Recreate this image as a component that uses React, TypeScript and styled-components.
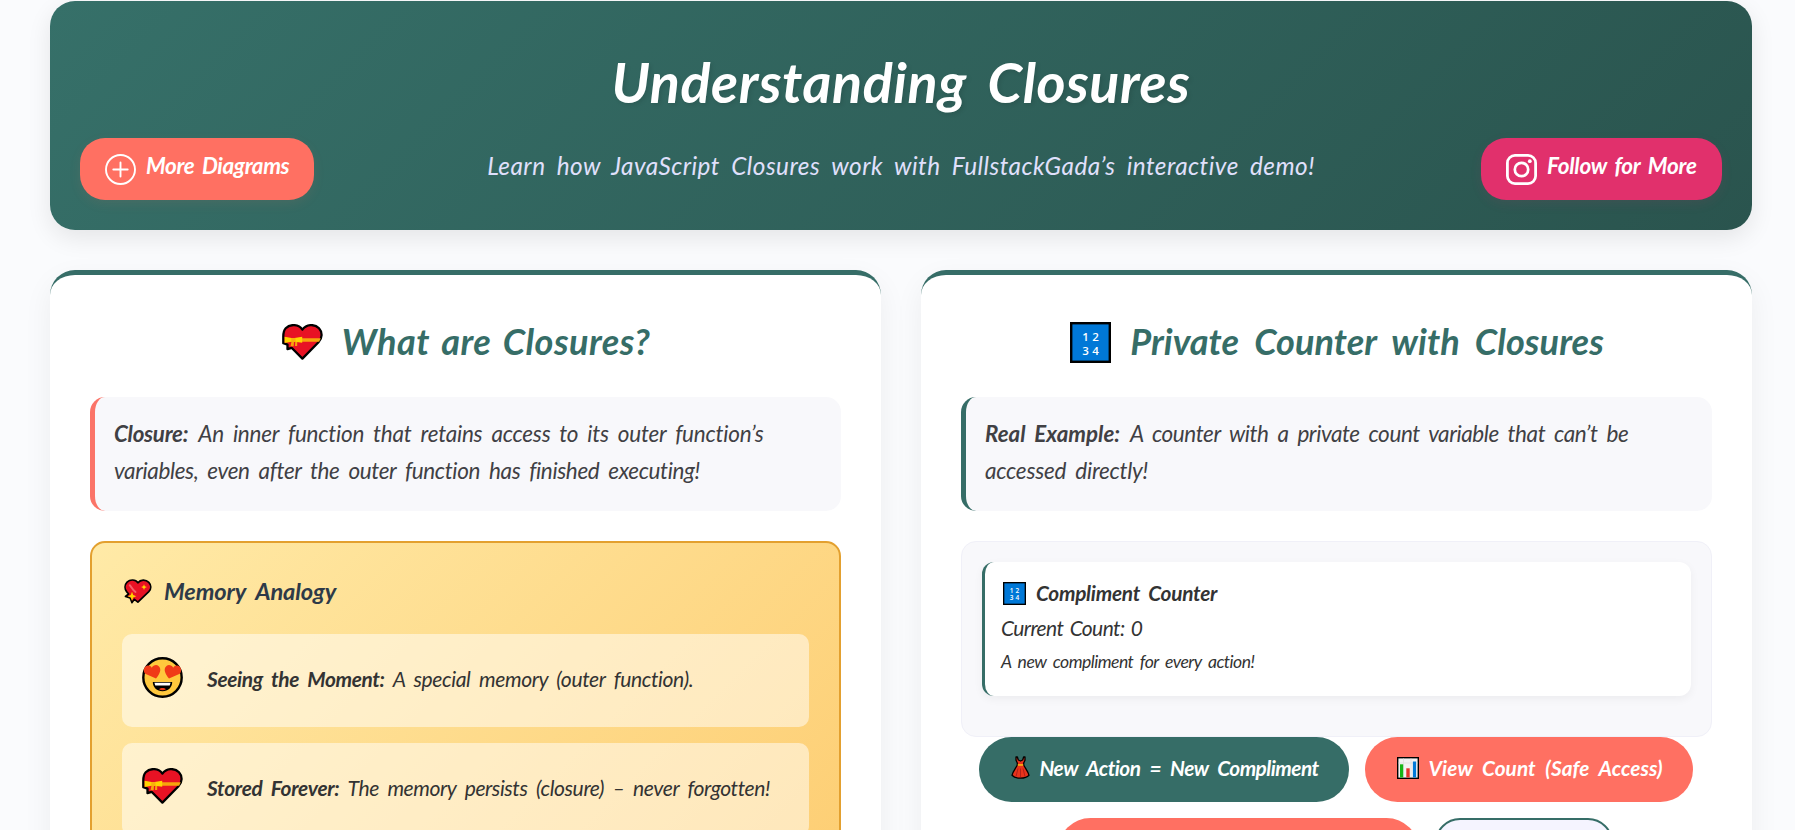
import React from "react";
import styled, { createGlobalStyle } from "styled-components";

const green = "#366d67";
const coral = "#ff7062";

const GlobalStyle = createGlobalStyle`
  * { box-sizing: border-box; }
  html, body { margin: 0; overflow: hidden; }
  body {
    background: #fafbfd;
    font-family: Lato, "Open Sans", sans-serif;
    font-style: italic;
    color: #333;
  }
  svg { display: block; flex: none; }
`;

const Page = styled.main`
  height: 830px;
  padding: 1px 43px 0 50px;
  overflow: hidden;
`;

const Text = styled.span<{ $size: number; $bold?: boolean; $ls?: number; $ws?: number }>`
  font-size: ${p => p.$size}px;
  font-weight: ${p => (p.$bold ? 700 : 400)};
  letter-spacing: ${p => p.$ls ?? 0}px;
  word-spacing: ${p => p.$ws ?? 4}px;
  white-space: nowrap;
`;

const Header = styled.header`
  height: 229px;
  padding: 45px 30px 30px;
  border-radius: 25px;
  background: linear-gradient(135deg, #367069 0%, #2a544e 100%);
  box-shadow: 0 8px 25px rgba(0, 0, 0, 0.09);
`;

const Title = styled.h1`
  margin: 0 0 22px;
  height: 70px;
  line-height: 71px;
  text-align: center;
  font-size: 55.6px;
  font-weight: 700;
  letter-spacing: 0.6px;
  word-spacing: 8px;
  color: #fff;
  text-shadow: 2px 2px 4px rgba(0, 0, 0, 0.1);
`;

const HeaderRow = styled.div`
  display: grid;
  grid-template-columns: 241px 1fr 241px;
  align-items: center;
`;

const Subtitle = styled.p`
  margin: 0;
  padding-bottom: 4px;
  text-align: center;
  color: #e0e0fc;
  line-height: 30px;
`;

const LinkButton = styled.a<{ $color: string; $width: number }>`
  display: flex;
  align-items: center;
  gap: 10px;
  width: ${p => p.$width}px;
  height: 62px;
  padding-left: 25px;
  border-radius: 25px;
  background: ${p => p.$color};
  color: #fff;
  box-shadow: 0 4px 12px ${p => p.$color}18;

  ${Text} { padding-bottom: 7px; }
`;

const Columns = styled.div`
  display: grid;
  grid-template-columns: 1fr 1fr;
  gap: 40px;
  margin-top: 40px;
`;

const Card = styled.section`
  height: 900px;
  padding: 40px;
  border-top: 5px solid ${green};
  border-radius: 25px;
  background: #fff;
  box-shadow: 0 10px 30px rgba(0, 0, 0, 0.06);
`;

const CardTitle = styled.h2`
  display: flex;
  align-items: center;
  justify-content: center;
  gap: 19px;
  height: 54px;
  margin: 0 0 28px;
  padding-left: 1px;
  color: ${green};

  ${Text} { padding-bottom: 2px; }
`;

const Info = styled.div<{ $accent: string }>`
  height: 114px;
  margin-bottom: 30px;
  padding: 18px 19px;
  border-left: 5px solid ${p => p.$accent};
  border-radius: 15px;
  background: #f8f8fb;
  color: #404044;
`;

const InfoLine = styled.div`
  display: flex;
  gap: 10px;
  line-height: 37px;
`;

const Analogy = styled.div`
  height: 450px;
  padding: 30px;
  border: 2px solid #e3a02f;
  border-radius: 15px;
  background: linear-gradient(135deg, #ffeaa7 0%, #fdcb6e 100%);
`;

const AnalogyTitle = styled.h3`
  display: flex;
  align-items: center;
  gap: 12px;
  height: 36px;
  margin: 0 0 25px;
  padding-left: 2px;
  color: #2d3a48;

  ${Text} { padding-bottom: 1px; }
`;

const Step = styled.div`
  display: flex;
  align-items: center;
  height: 93px;
  margin-bottom: 16px;
  padding: 0 20px 6px;
  border-radius: 10px;
  background: rgba(255, 255, 255, 0.5);
`;

const StepText = styled.div`
  display: flex;
  gap: 8px;
  margin-left: 24px;
  padding-top: 2px;
`;

const Panel = styled.div`
  height: 196px;
  padding: 20px;
  border: 1px solid #f0f0f8;
  border-radius: 15px;
  background: #f8f8fb;
`;

const CounterCard = styled.div`
  display: flex;
  flex-direction: column;
  height: 134px;
  padding: 14px 16px;
  border-left: 3px solid ${green};
  border-radius: 12px;
  background: #fff;
  box-shadow: 0 3px 10px rgba(0, 0, 0, 0.05);
  line-height: 34.6px;
`;

const CounterTitle = styled.div`
  display: flex;
  align-items: center;
  gap: 10px;
  padding-left: 2px;
`;

const Actions = styled.div`
  display: flex;
  flex-wrap: wrap;
  justify-content: center;
  gap: 16px;
  padding-right: 2px;
`;

const ActionButton = styled.button<{ $width: number; $variant: "green" | "coral" | "outline" }>`
  display: flex;
  align-items: center;
  gap: 10px;
  width: ${p => p.$width}px;
  height: 65px;
  padding: 0 0 4px 32px;
  border: ${p => (p.$variant === "outline" ? `2px solid ${green}` : "none")};
  border-radius: ${p => (p.$variant === "outline" ? 25 : 32.5)}px;
  background: ${p => (p.$variant === "green" ? green : p.$variant === "coral" ? coral : "#f5f4ff")};
  color: #fff;
  font-family: inherit;
  font-style: italic;
`;

const PlusCircle = () => (
  <svg width="31" height="31" viewBox="0 0 31 31" fill="none" stroke="#fff" strokeWidth="1.9" strokeLinecap="round">
    <circle cx="15.5" cy="15.5" r="14.5" />
    <path d="M15.5 8.5v14M8.3 15.5h14.4" />
  </svg>
);

const Instagram = () => (
  <svg width="31" height="31" viewBox="0 0 31 31" fill="none" stroke="#fff">
    <rect x="1.4" y="1.4" width="28.2" height="28.2" rx="7.6" strokeWidth="2.8" />
    <circle cx="15.5" cy="15.5" r="6.7" strokeWidth="2.7" />
    <circle cx="23.8" cy="7.2" r="1.9" fill="#fff" stroke="none" />
  </svg>
);

const RibbonHeart = () => (
  <svg width="41" height="37" viewBox="0 0 41 37">
    <path
      d="M20.4 5.6C16.5-.2 8-.1 3.7 4.2 1.3 6.7 1.3 9.500 1.3 12.5V19.2L5.500 20.6V25.200L9.6 23.8 20.4 34.6 36.5 18.2C40.4 14.2 40.6 8.2 37 4.3 32.7-.2 24.5-.1 20.4 5.6Z"
      fill="#e81224" stroke="#000" strokeWidth="2.3" strokeLinejoin="round"
    />
    <path d="M19 14.3H38.7L37.2 17.8H19Z" fill="#f7a30c" />
    <path d="M9.5 17.5H12L11.7 22.2H8.5ZM13.2 17.5H15.2V22H13Z" fill="#f7a30c" />
    <path d="M2.6 12.8 11 14.3 20.2 12.8V18.8L11 17.6 2.6 19Z" fill="#ffd400" />
    <path d="M9.3 14H13.5V18H9.3Z" fill="#f9b10b" />
  </svg>
);

const SparkleHeart = () => (
  <svg width="28" height="25" viewBox="0 0 28 25">
    <path
      d="M14 3.8C11.5.2 6 .2 3.1 3.2.6 5.8.4 9.8 2.6 12.6L4.6 15 1.5 17.4 6.2 19 8 23.6 10.4 20.3 13.9 23.2 24.8 12.6C27.4 9.9 27.4 6 24.8 3.3 21.8.2 16.5.2 14 3.8Z"
      fill="#e81224" stroke="#000" strokeWidth="1.7" strokeLinejoin="round"
    />
    <path d="M5.8 6.2C7.500 8 8 10.500 11.500 13" stroke="#f4606a" strokeWidth="2" fill="none" strokeLinecap="round" />
    <path d="M8 12.8 9.2 16 12.3 17.2 9.2 18.4 8 21.8 6.8 18.4 3.8 17.2 6.8 16ZM20 5.2 20.8 7.3 22.9 8.1 20.8 8.9 20 11 19.2 8.9 17.1 8.1 19.2 7.3Z" fill="#ffd400" />
  </svg>
);

const HeartEyes = () => (
  <svg width="41" height="41" viewBox="0 0 41 41">
    <circle cx="20.5" cy="20.5" r="19.2" fill="#ffc83d" stroke="#000" strokeWidth="2.4" />
    <path
      d="M14 21.6 3.2 16.7C.8 14.5 1.7 9.7 4.9 8.8 7 8.2 8.8 9.1 9.8 10.8 11 8.2 14.4 7.3 16.5 8.9 20.3 12 17.5 17 14 21.6Z"
      fill="#f03a17"
    />
    <path
      d="M27 21.6 37.8 16.7C40.2 14.5 39.3 9.7 36.1 8.8 34 8.2 32.2 9.1 31.2 10.8 30 8.2 26.6 7.3 24.5 8.9 20.7 12 23.5 17 27 21.6Z"
      fill="#f03a17"
    />
    <path d="M10.8 25H30.2C30.2 30.5 26 34.2 20.5 34.2 15 34.2 10.8 30.5 10.8 25Z" fill="#000" />
    <path d="M12.4 25.8H28.6L27.7 28.4H13.3Z" fill="#fff" />
    <path d="M17 32.3C18.6 30.6 22.4 30.6 24 32.3 22 33.5 19 33.5 17 32.3Z" fill="#f03a17" />
  </svg>
);

const DigitLabel = styled.text`
  font: normal 600 11.5px "Open Sans", sans-serif;
  fill: #fff;
  text-anchor: middle;
`;

const Numbers = ({ size }: { size: number }) => (
  <svg width={size} height={size} viewBox="0 0 41 41">
    <rect x="1.2" y="1.2" width="38.6" height="38.6" fill="#0078d7" stroke="#000" strokeWidth="2.4" />
    <DigitLabel x="15.5" y="18.8">1</DigitLabel>
    <DigitLabel x="25.5" y="18.8">2</DigitLabel>
    <DigitLabel x="15.5" y="32.6">3</DigitLabel>
    <DigitLabel x="25.5" y="32.6">4</DigitLabel>
  </svg>
);

const Dress = () => (
  <svg width="19" height="23" viewBox="0 0 19 23">
    <path
      d="M5 1V4.3L6.3 7 6.2 9.3C4.5 12.5 1.8 15.5 1 19.3 3 21.5 6 22.2 9.5 22.2 13 22.2 16 21.5 18 19.3 17.2 15.5 14.5 12.5 12.8 9.3L12.7 7 14 4.3V1H12.6L11.7 4 9.5 5 7.3 4 6.4 1Z"
      fill="#e8331c" stroke="#000" strokeWidth="1.3" strokeLinejoin="round"
    />
    <path d="M7 12.5 5 20.5M9.5 12.5V21M12 12.5 14 20.5" stroke="#b3201a" strokeWidth="1" />
    <path d="M6.8 8.2H12.2V9.7H6.8Z" fill="#ffc20e" />
  </svg>
);

const Chart = () => (
  <svg width="22" height="22" viewBox="0 0 22 22">
    <rect x=".7" y=".7" width="20.6" height="20.6" fill="#f2f2f2" stroke="#000" strokeWidth="1.4" />
    <path d="M6.5 1.5V20M14 1.5V20M1.5 6H20.5" stroke="#dedede" strokeWidth=".8" />
    <path d="M3 7.3H6.2V20.5H3Z" fill="#16b516" />
    <path d="M9.3 11.3H12.7V20.5H9.3Z" fill="#e5342b" />
    <path d="M15.9 4.5H19.1V20.5H15.9Z" fill="#0078d7" />
  </svg>
);

export default function App() {
  return (
    <Page>
      <GlobalStyle />
      <Header>
        <Title>Understanding Closures</Title>
        <HeaderRow>
          <LinkButton $color={coral} $width={234}>
            <PlusCircle />
            <Text $size={22.5} $bold $ls={-0.38} $ws={3}>More Diagrams</Text>
          </LinkButton>
          <Subtitle>
            <Text $size={24.3} $ls={0.5} $ws={5}>
              Learn how JavaScript Closures work with FullstackGada’s interactive demo!
            </Text>
          </Subtitle>
          <LinkButton $color="#e1306c" $width={241}>
            <Instagram />
            <Text $size={22.5} $bold $ls={-0.25} $ws={3}>Follow for More</Text>
          </LinkButton>
        </HeaderRow>
      </Header>

      <Columns>
        <Card>
          <CardTitle>
            <RibbonHeart />
            <Text $size={36.1} $bold $ls={0.45} $ws={3}>What are Closures?</Text>
          </CardTitle>
          <Info $accent="#fb7468">
            <InfoLine>
              <Text $size={22.3} $bold $ls={-0.25}>Closure:</Text>
              <Text $size={22.5} $ls={-0.22}>An inner function that retains access to its outer function’s</Text>
            </InfoLine>
            <InfoLine>
              <Text $size={22.5} $ls={-0.36}>variables, even after the outer function has finished executing!</Text>
            </InfoLine>
          </Info>
          <Analogy>
            <AnalogyTitle>
              <SparkleHeart />
              <Text $size={23.6} $bold $ls={-0.1} $ws={5}>Memory Analogy</Text>
            </AnalogyTitle>
            <Step>
              <HeartEyes />
              <StepText>
                <Text $size={20.9} $bold $ls={-0.36}>Seeing the Moment:</Text>
                <Text $size={21.1} $ls={-0.38}>A special memory (outer function).</Text>
              </StepText>
            </Step>
            <Step>
              <RibbonHeart />
              <StepText>
                <Text $size={20.9} $bold $ls={-0.3}>Stored Forever:</Text>
                <Text $size={21.1} $ls={-0.4}>The memory persists (closure) – never forgotten!</Text>
              </StepText>
            </Step>
          </Analogy>
        </Card>

        <Card>
          <CardTitle>
            <Numbers size={41} />
            <Text $size={36.1} $bold $ls={0.07} $ws={7}>Private Counter with Closures</Text>
          </CardTitle>
          <Info $accent={green}>
            <InfoLine>
              <Text $size={22.3} $bold>Real Example:</Text>
              <Text $size={22.5} $ls={-0.41}>A counter with a private count variable that can’t be</Text>
            </InfoLine>
            <InfoLine>
              <Text $size={22.5} $ls={-0.22}>accessed directly!</Text>
            </InfoLine>
          </Info>
          <Panel>
            <CounterCard>
              <CounterTitle>
                <Numbers size={23} />
                <Text $size={20.8} $bold $ls={-0.25}>Compliment Counter</Text>
              </CounterTitle>
              <Text $size={21} $ls={-0.6} $ws={2}>Current Count: 0</Text>
              <Text $size={17.6} $ls={-0.53} $ws={3}>A new compliment for every action!</Text>
            </CounterCard>
          </Panel>
          <Actions>
            <ActionButton $variant="green" $width={370}>
              <Dress />
              <Text $size={20.8} $bold $ls={-0.52} $ws={5}>New Action = New Compliment</Text>
            </ActionButton>
            <ActionButton $variant="coral" $width={328}>
              <Chart />
              <Text $size={20.8} $bold $ls={0.06} $ws={5}>View Count (Safe Access)</Text>
            </ActionButton>
            <ActionButton $variant="coral" $width={361} />
            <ActionButton $variant="outline" $width={178} />
          </Actions>
        </Card>
      </Columns>
    </Page>
  );
}
